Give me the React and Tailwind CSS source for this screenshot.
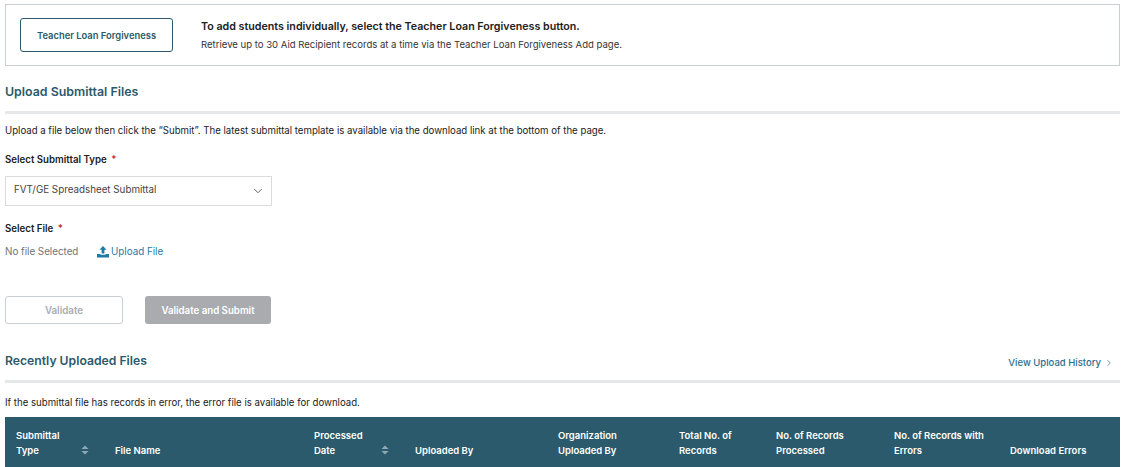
import React from 'react';
import { ChevronDown, ChevronRight } from 'lucide-react';

const SortIcon = () => (
  <svg width="8" height="10" viewBox="0 0 8 10" className="mb-[3px] shrink-0" fill="#8fa9b4">
    <path d="M4 0.5 L7.5 4 L0.5 4 Z" />
    <path d="M4 9.5 L7.5 6 L0.5 6 Z" />
  </svg>
);

const UploadIcon = () => (
  <svg width="12" height="12" viewBox="0 0 12 12" fill="#1f7aa8">
    <path d="M6 0 L9.6 3.8 L7.4 3.8 L7.4 7.4 L4.6 7.4 L4.6 3.8 L2.4 3.8 Z" />
    <path d="M0 8 L3.4 8 L3.4 8.8 L8.6 8.8 L8.6 8 L12 8 L12 11.6 L0 11.6 Z" />
  </svg>
);

const columns = [
  { label: ['Submittal', 'Type'], sort: true, width: 'w-[65px]' },
  { label: ['File Name'] },
  { label: ['Processed', 'Date'], sort: true, width: 'w-[67px]' },
  { label: ['Uploaded By'] },
  { label: ['Organization', 'Uploaded By'] },
  { label: ['Total No. of', 'Records'] },
  { label: ['No. of Records', 'Processed'] },
  { label: ['No. of Records with', 'Errors'] },
  { label: ['Download Errors'] },
];

export default function App() {
  return (
    <div className="w-[1124px] h-[467px] overflow-hidden bg-white pl-[5px] pr-[4px] pt-[4px] text-[#212121] font-['Inter','Liberation_Sans',sans-serif]">
      <div className="h-[62px] border border-[#c9ced3] flex items-center pl-[14px]">
        <button className="w-[153px] h-[34px] pt-[2px] border border-[#2a5a6b] rounded-[3px] text-[9.4px] font-semibold text-[#2a5a6b]">Teacher Loan Forgiveness</button>
        <div className="ml-[28px]">
          <p className="text-[10.7px] leading-[16px] font-semibold text-[#212121]">To add students individually, select the Teacher Loan Forgiveness button.</p>
          <p className="text-[9.55px] leading-[14px] mt-[3px] text-[#333]">Retrieve up to 30 Aid Recipient records at a time via the Teacher Loan Forgiveness Add page.</p>
        </div>
      </div>

      <div className="mt-[17px] pb-[10px] border-b-[3px] border-[#e6e7e8]">
        <h2 className="text-[12.4px] leading-[18px] font-semibold text-[#2a5a6b]">Upload Submittal Files</h2>
      </div>

      <p className="mt-[10px] text-[9.65px] leading-[14px] text-[#212121]">Upload a file below then click the “Submit”. The latest submittal template is available via the download link at the bottom of the page.</p>

      <label className="block mt-[15px] text-[9.7px] leading-[14px] font-semibold text-[#212121]">Select Submittal Type <span className="text-[#c0272d] ml-[2px]">*</span></label>

      <div className="mt-[9px] w-[267px] h-[30px] border border-[#d9dbdd] flex items-center justify-between pl-[8px] pr-[6px] pb-[1px] text-[9.8px] text-[#444]">
        <span>FVT/GE Spreadsheet Submittal</span>
        <ChevronDown size={14} strokeWidth={1.4} className="text-[#444]" />
      </div>

      <label className="block mt-[16px] text-[9.7px] leading-[14px] font-semibold text-[#212121]">Select File <span className="text-[#c0272d] ml-[2px]">*</span></label>

      <div className="mt-[9px] flex items-center h-[14px] text-[9.8px]">
        <span className="text-[#6f7478] w-[92px]">No file Selected</span>
        <UploadIcon />
        <span className="ml-[2px] text-[#2a7aa5]">Upload File</span>
      </div>

      <div className="mt-[37px] flex gap-[22px]">
        <button className="w-[118px] h-[28px] pt-[2px] border border-[#c9ced3] rounded-[3px] text-[9.8px] font-semibold text-[#a9adb1]">Validate</button>
        <button className="w-[126px] h-[28px] pt-[2px] rounded-[3px] bg-[#a9abaf] text-[9.7px] font-semibold text-white">Validate and Submit</button>
      </div>

      <div className="mt-[28px] pb-[10px] border-b-[3px] border-[#e6e7e8] flex items-start justify-between">
        <h2 className="text-[12.2px] leading-[18px] font-semibold text-[#2a5a6b]">Recently Uploaded Files</h2>
        <a className="flex items-center mt-[4px] pr-[6px] text-[9.5px] leading-[14px] font-medium text-[#2a6f8f]">
          View Upload History
          <ChevronRight size={10} strokeWidth={1.6} className="ml-[3px]" />
        </a>
      </div>

      <p className="mt-[13px] text-[9.65px] leading-[14px] text-[#212121]">If the submittal file has records in error, the error file is available for download.</p>

      <div className="mt-[7px] h-[50px] bg-[#2a5a6b] grid grid-cols-[99px_199px_101px_143px_121px_97px_118px_116px_1fr] pl-[11px] items-end pb-[9px] text-[9.5px] leading-[15px] font-semibold text-white">
        {columns.map((c) => (
          <div key={c.label.join(' ')} className="flex items-end">
            <div className={`${c.width || ''} shrink-0 whitespace-nowrap`}>
              {c.label.map((l) => <div key={l}>{l}</div>)}
            </div>
            {c.sort && <SortIcon />}
          </div>
        ))}
      </div>
    </div>
  );
}
